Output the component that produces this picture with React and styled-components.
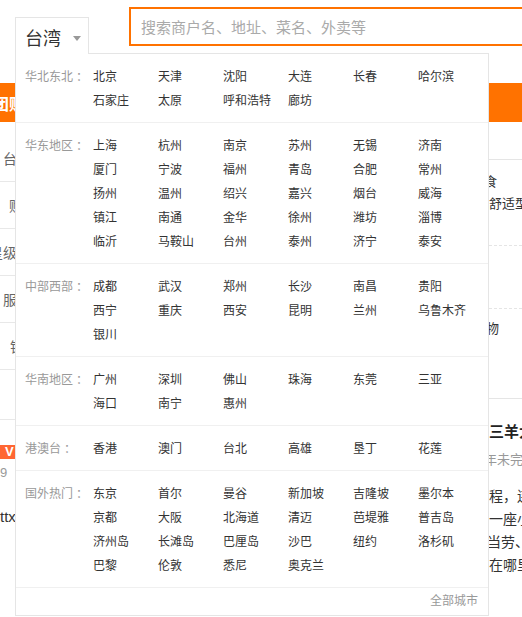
import React from 'react';
import styled, { createGlobalStyle } from 'styled-components';

const ORANGE = '#ff7200';

const GlobalStyle = createGlobalStyle`
  html, body {
    margin: 0;
    padding: 0;
    background: #fff;
  }
  body {
    font-family: "Microsoft YaHei", "Noto Sans CJK SC", "Noto Sans", sans-serif;
    color: #333;
  }
`;

const regions = [
  { label: '华北东北', cities: ['北京', '天津', '沈阳', '大连', '长春', '哈尔滨', '石家庄', '太原', '呼和浩特', '廊坊'] },
  {
    label: '华东地区',
    cities: ['上海', '杭州', '南京', '苏州', '无锡', '济南', '厦门', '宁波', '福州', '青岛', '合肥', '常州', '扬州', '温州', '绍兴', '嘉兴', '烟台', '威海', '镇江', '南通', '金华', '徐州', '潍坊', '淄博', '临沂', '马鞍山', '台州', '泰州', '济宁', '泰安'],
  },
  { label: '中部西部', cities: ['成都', '武汉', '郑州', '长沙', '南昌', '贵阳', '西宁', '重庆', '西安', '昆明', '兰州', '乌鲁木齐', '银川'] },
  { label: '华南地区', cities: ['广州', '深圳', '佛山', '珠海', '东莞', '三亚', '海口', '南宁', '惠州'] },
  { label: '港澳台', cities: ['香港', '澳门', '台北', '高雄', '垦丁', '花莲'] },
  {
    label: '国外热门',
    cities: ['东京', '首尔', '曼谷', '新加坡', '吉隆坡', '墨尔本', '京都', '大阪', '北海道', '清迈', '芭堤雅', '普吉岛', '济州岛', '长滩岛', '巴厘岛', '沙巴', '纽约', '洛杉矶', '巴黎', '伦敦', '悉尼', '奥克兰'],
  },
];

const sideItems = [
  { text: '台湾美食', shift: 3 },
  { text: '购物中心', shift: 9 },
  { text: '星级酒店', shift: -11 },
  { text: '服务', shift: 3 },
  { text: '银行', shift: 10 },
];

const Page = styled.div`
  position: relative;
  width: 522px;
  height: 617px;
  overflow: hidden;
`;

const Header = styled.div`
  display: flex;
  align-items: flex-start;
  height: 83px;
  padding-left: 15px;
  box-sizing: border-box;
`;

const CitySwitch = styled.div`
  position: relative;
  margin-top: 17px;
  flex: none;
`;

const CityTab = styled.div`
  position: relative;
  z-index: 3;
  display: flex;
  align-items: center;
  box-sizing: border-box;
  width: 74px;
  height: 37px;
  padding: 2px 0 0 9px;
  border: 1px solid #e5e5e5;
  border-bottom: none;
  background: #fff;
  font-size: 18px;
  color: #333;
`;

const Caret = styled.span`
  margin: 3px 0 0 12px;
  width: 0;
  height: 0;
  border-left: 4px solid transparent;
  border-right: 4px solid transparent;
  border-top: 5px solid #999;
`;

const Panel = styled.div`
  position: absolute;
  top: 36px;
  left: 0;
  z-index: 2;
  width: 474px;
  box-sizing: border-box;
  border: 1px solid #e5e5e5;
  background: #fff;
`;

const Region = styled.div`
  display: flex;
  padding: 10px 0 10px 9px;
  border-bottom: 1px solid #f0f0f0;
  &:last-of-type {
    border-bottom: none;
  }
`;

const RegionLabel = styled.div`
  flex: none;
  width: 68px;
  font-size: 12px;
  line-height: 24px;
  color: #999;
  white-space: nowrap;
`;

const Colon = styled.span`
  margin-left: 3px;
`;

const CityGrid = styled.div`
  display: grid;
  grid-template-columns: repeat(6, 65px);
  font-size: 12px;
  line-height: 24px;
`;

const City = styled.a`
  color: #333;
  text-decoration: none;
  white-space: nowrap;
`;

const AllCities = styled.div`
  text-align: right;
  padding: 0 10px 3px 0;
  font-size: 12px;
  line-height: 24px;
  color: #999;
`;

const SearchBox = styled.div`
  flex: none;
  display: flex;
  align-items: center;
  width: 420px;
  height: 39px;
  margin: 7px 0 0 40px;
  box-sizing: border-box;
  border: 2px solid ${ORANGE};
  padding-left: 10px;
`;

const SearchInput = styled.input`
  flex: 1;
  border: none;
  outline: none;
  padding: 0;
  background: transparent;
  font-family: inherit;
  font-size: 15px;
  color: #333;
  &::placeholder {
    color: #aaa;
  }
`;

const NavBar = styled.div`
  display: flex;
  align-items: center;
  gap: 30px;
  height: 39px;
  background: ${ORANGE};
`;

const NavItem = styled.span`
  color: #fff;
  font-size: 16px;
  font-weight: bold;
  white-space: nowrap;
  &:first-child {
    margin-left: -7px;
  }
`;

const Body = styled.div`
  display: flex;
`;

const Sidebar = styled.div`
  flex: none;
  width: 150px;
  padding-top: 13px;
`;

const SideItem = styled.div`
  display: flex;
  align-items: center;
  height: 47px;
  box-sizing: border-box;
  border-bottom: 1px solid #e8e8e8;
  font-size: 14px;
  color: #666;
  white-space: nowrap;
`;

const SideText = styled.span`
  margin-left: ${(p) => p.$shift}px;
`;

const SideGap = styled.div`
  height: 50px;
  box-sizing: border-box;
  border-bottom: 1px solid #e8e8e8;
`;

const Review = styled.div`
  display: flex;
  flex-direction: column;
  align-items: flex-start;
  padding-top: 25px;
`;

const VipBadge = styled.span`
  display: inline-block;
  margin-left: -4px;
  padding: 0 3px 0 9px;
  background: #ff6633;
  color: #fff;
  font-family: "Liberation Sans", Arial, sans-serif;
  font-weight: bold;
  font-size: 13px;
  line-height: 14px;
`;

const ReviewDate = styled.span`
  margin-top: 6px;
  font-family: "Liberation Sans", Arial, sans-serif;
  font-size: 13px;
  color: #999;
`;

const ReviewUser = styled.span`
  margin-top: 28px;
  font-family: "Liberation Sans", Arial, sans-serif;
  font-size: 15px;
  color: #333;
`;

const Main = styled.div`
  flex: 1;
`;

const Aside = styled.div`
  flex: none;
  width: 33px;
  padding-top: 37px;
  white-space: nowrap;
`;

const AsideBlock = styled.div`
  height: ${(p) => p.$h}px;
  box-sizing: border-box;
  padding-top: ${(p) => p.$pad}px;
  border-top: 1px ${(p) => p.$line} #e5e5e5;
  font-size: 13px;
  line-height: 22px;
  color: #333;
`;

const AsideLine = styled.div`
  margin-left: ${(p) => p.$shift || 0}px;
`;

const ShopTitle = styled.div`
  margin-top: 21px;
  font-size: 15px;
  font-weight: bold;
  color: #222;
`;

const ShopMeta = styled.div`
  margin: 6px 0 0 -5px;
  font-size: 13px;
  color: #999;
`;

const ShopText = styled.div`
  margin-top: 14px;
  font-size: 14px;
  line-height: 23px;
  color: #333;
`;

function CityPicker() {
  return (
    <CitySwitch>
      <CityTab>
        台湾
        <Caret />
      </CityTab>
      <Panel>
        {regions.map((r) => (
          <Region key={r.label}>
            <RegionLabel>
              {r.label}
              <Colon>：</Colon>
            </RegionLabel>
            <CityGrid>
              {r.cities.map((c) => (
                <City key={c} href="#">{c}</City>
              ))}
            </CityGrid>
          </Region>
        ))}
        <AllCities>全部城市</AllCities>
      </Panel>
    </CitySwitch>
  );
}

export default function App() {
  return (
    <Page>
      <GlobalStyle />
      <Header>
        <CityPicker />
        <SearchBox>
          <SearchInput placeholder="搜索商户名、地址、菜名、外卖等" />
        </SearchBox>
      </Header>
      <NavBar>
        <NavItem>团购</NavItem>
        <NavItem>美食</NavItem>
        <NavItem>休闲娱乐</NavItem>
        <NavItem>酒店</NavItem>
      </NavBar>
      <Body>
        <Sidebar>
          {sideItems.map((s) => (
            <SideItem key={s.text}>
              <SideText $shift={s.shift}>{s.text}</SideText>
            </SideItem>
          ))}
          <SideGap />
          <Review>
            <VipBadge>V</VipBadge>
            <ReviewDate>9</ReviewDate>
            <ReviewUser>ttx</ReviewUser>
          </Review>
        </Sidebar>
        <Main />
        <Aside>
          <AsideBlock $h={86} $pad={10} $line="solid">
            <AsideLine $shift={-18}>美食</AsideLine>
            <AsideLine>舒适型</AsideLine>
          </AsideBlock>
          <AsideBlock $h={63} $pad={0} $line="dashed" />
          <AsideBlock $h={90} $pad={8} $line="dashed">
            <AsideLine $shift={-16}>购物</AsideLine>
          </AsideBlock>
          <AsideBlock $h={200} $pad={0} $line="solid">
            <ShopTitle>三羊大</ShopTitle>
            <ShopMeta>年未完</ShopMeta>
            <ShopText>
              <AsideLine>程，连</AsideLine>
              <AsideLine>一座小</AsideLine>
              <AsideLine $shift={-2}>当劳、</AsideLine>
              <AsideLine>在哪里</AsideLine>
            </ShopText>
          </AsideBlock>
        </Aside>
      </Body>
    </Page>
  );
}
